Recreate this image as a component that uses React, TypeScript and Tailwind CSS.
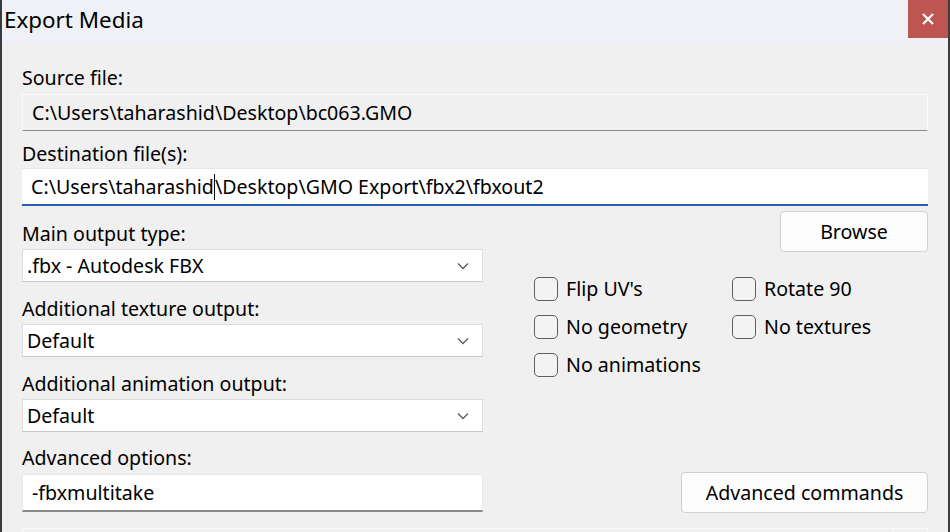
import React from "react";

const Chevron = () => (
  <svg width="12" height="8" viewBox="0 0 12 8" className="shrink-0">
    <path d="M1 1.5 L6 6.5 L11 1.5" fill="none" stroke="#5a5a5a" strokeWidth="1.3" />
  </svg>
);

const Select = ({ value }: { value: string }) => (
  <div className="flex h-[33px] items-center justify-between border border-[#dcdcdc] border-b-[#c8c8c8] bg-white pl-[4px] pr-[13px]">
    <span>{value}</span>
    <Chevron />
  </div>
);

const Check = ({ label }: { label: string }) => (
  <div className="flex h-[24px] items-center gap-[8px]">
    <div className="h-[24px] w-[24px] rounded-[5px] border border-[#5f5f5f] bg-[#f3f3f3]" />
    <span>{label}</span>
  </div>
);

const Button = ({ label, className }: { label: string; className: string }) => (
  <div
    className={
      "flex h-[41px] items-center justify-center rounded-[4px] border border-[#d0d0d0] bg-[#fdfdfd] " + className
    }
  >
    {label}
  </div>
);

export default function App() {
  return (
    <div
      className="relative h-[532px] w-[950px] overflow-hidden border-x-2 border-x-[#3c3c3c] bg-[#f0f0f0] text-[19.6px] leading-[24px] text-black"
      style={{ fontFamily: '"Noto Sans", "Segoe UI", sans-serif' }}
    >
      {/* Title bar */}
      <div className="flex h-[43px] items-start justify-between bg-[#eff1f7]">
        <div className="pl-[2px] pt-[5px] text-[22.4px] leading-[30px]">Export Media</div>
        <div className="flex h-[38px] w-[40px] items-center justify-center bg-[#bd5651]">
          <svg width="12" height="12" viewBox="0 0 12 12">
            <path d="M1 1 L11 11 M11 1 L1 11" stroke="#fff" strokeWidth="2.2" />
          </svg>
        </div>
      </div>

      <div className="flex flex-col px-[20px]">
        <div className="mt-[23px]">Source file:</div>
        <div className="mt-[4px] flex h-[37px] items-center border border-[#fbfbfb] border-b-[#8c8c8c] border-r-[#fbfbfb] bg-[#f0f0f0] pl-[9px]">
          C:\Users\taharashid\Desktop\bc063.GMO
        </div>

        <div className="mt-[11px]">Destination file(s):</div>
        <div className="mt-[2px] flex h-[38px] items-center border-t border-t-[#e6e6e6] border-b-2 border-b-[#2c5fb2] bg-white pl-[9px]">
          <span>C:\Users\taharashid</span>
          <span className="inline-block h-[26px] w-px bg-black" />
          <span>\Desktop\GMO Export\fbx2\fbxout2</span>
        </div>

        <div className="flex">
          {/* Left column */}
          <div className="flex w-[461px] flex-col">
            <div className="mt-[16px]">Main output type:</div>
            <div className="mt-[3px]">
              <Select value=".fbx - Autodesk FBX" />
            </div>
            <div className="mt-[15px]">Additional texture output:</div>
            <div className="mt-[3px]">
              <Select value="Default" />
            </div>
            <div className="mt-[15px]">Additional animation output:</div>
            <div className="mt-[3px]">
              <Select value="Default" />
            </div>
            <div className="mt-[14px]">Advanced options:</div>
            <div className="mt-[4px] flex h-[38px] items-center border border-[#e8e8e8] border-b-2 border-b-[#8a8a8a] bg-white pl-[9px]">
              -fbxmultitake
            </div>
          </div>

          {/* Right column */}
          <div className="flex flex-1 flex-col items-end">
            <Button label="Browse" className="mt-[5px] w-[148px]" />
            <div className="mt-[25px] grid w-full grid-cols-[198px_1fr] gap-y-[14px] pl-[51px]">
              <Check label="Flip UV's" />
              <Check label="Rotate 90" />
              <Check label="No geometry" />
              <Check label="No textures" />
              <Check label="No animations" />
            </div>
            <Button label="Advanced commands" className="mt-auto mb-[-1px] w-[247px]" />
          </div>
        </div>

        {/* Bottom partially visible element */}
        <div className="mt-[16px] flex h-[30px] border border-[#fafafa] bg-[#f0f0f0]">
          <div className="flex-1" />
          <div className="w-[34px] border-l border-l-[#fafafa]" />
        </div>
      </div>
    </div>
  );
}
